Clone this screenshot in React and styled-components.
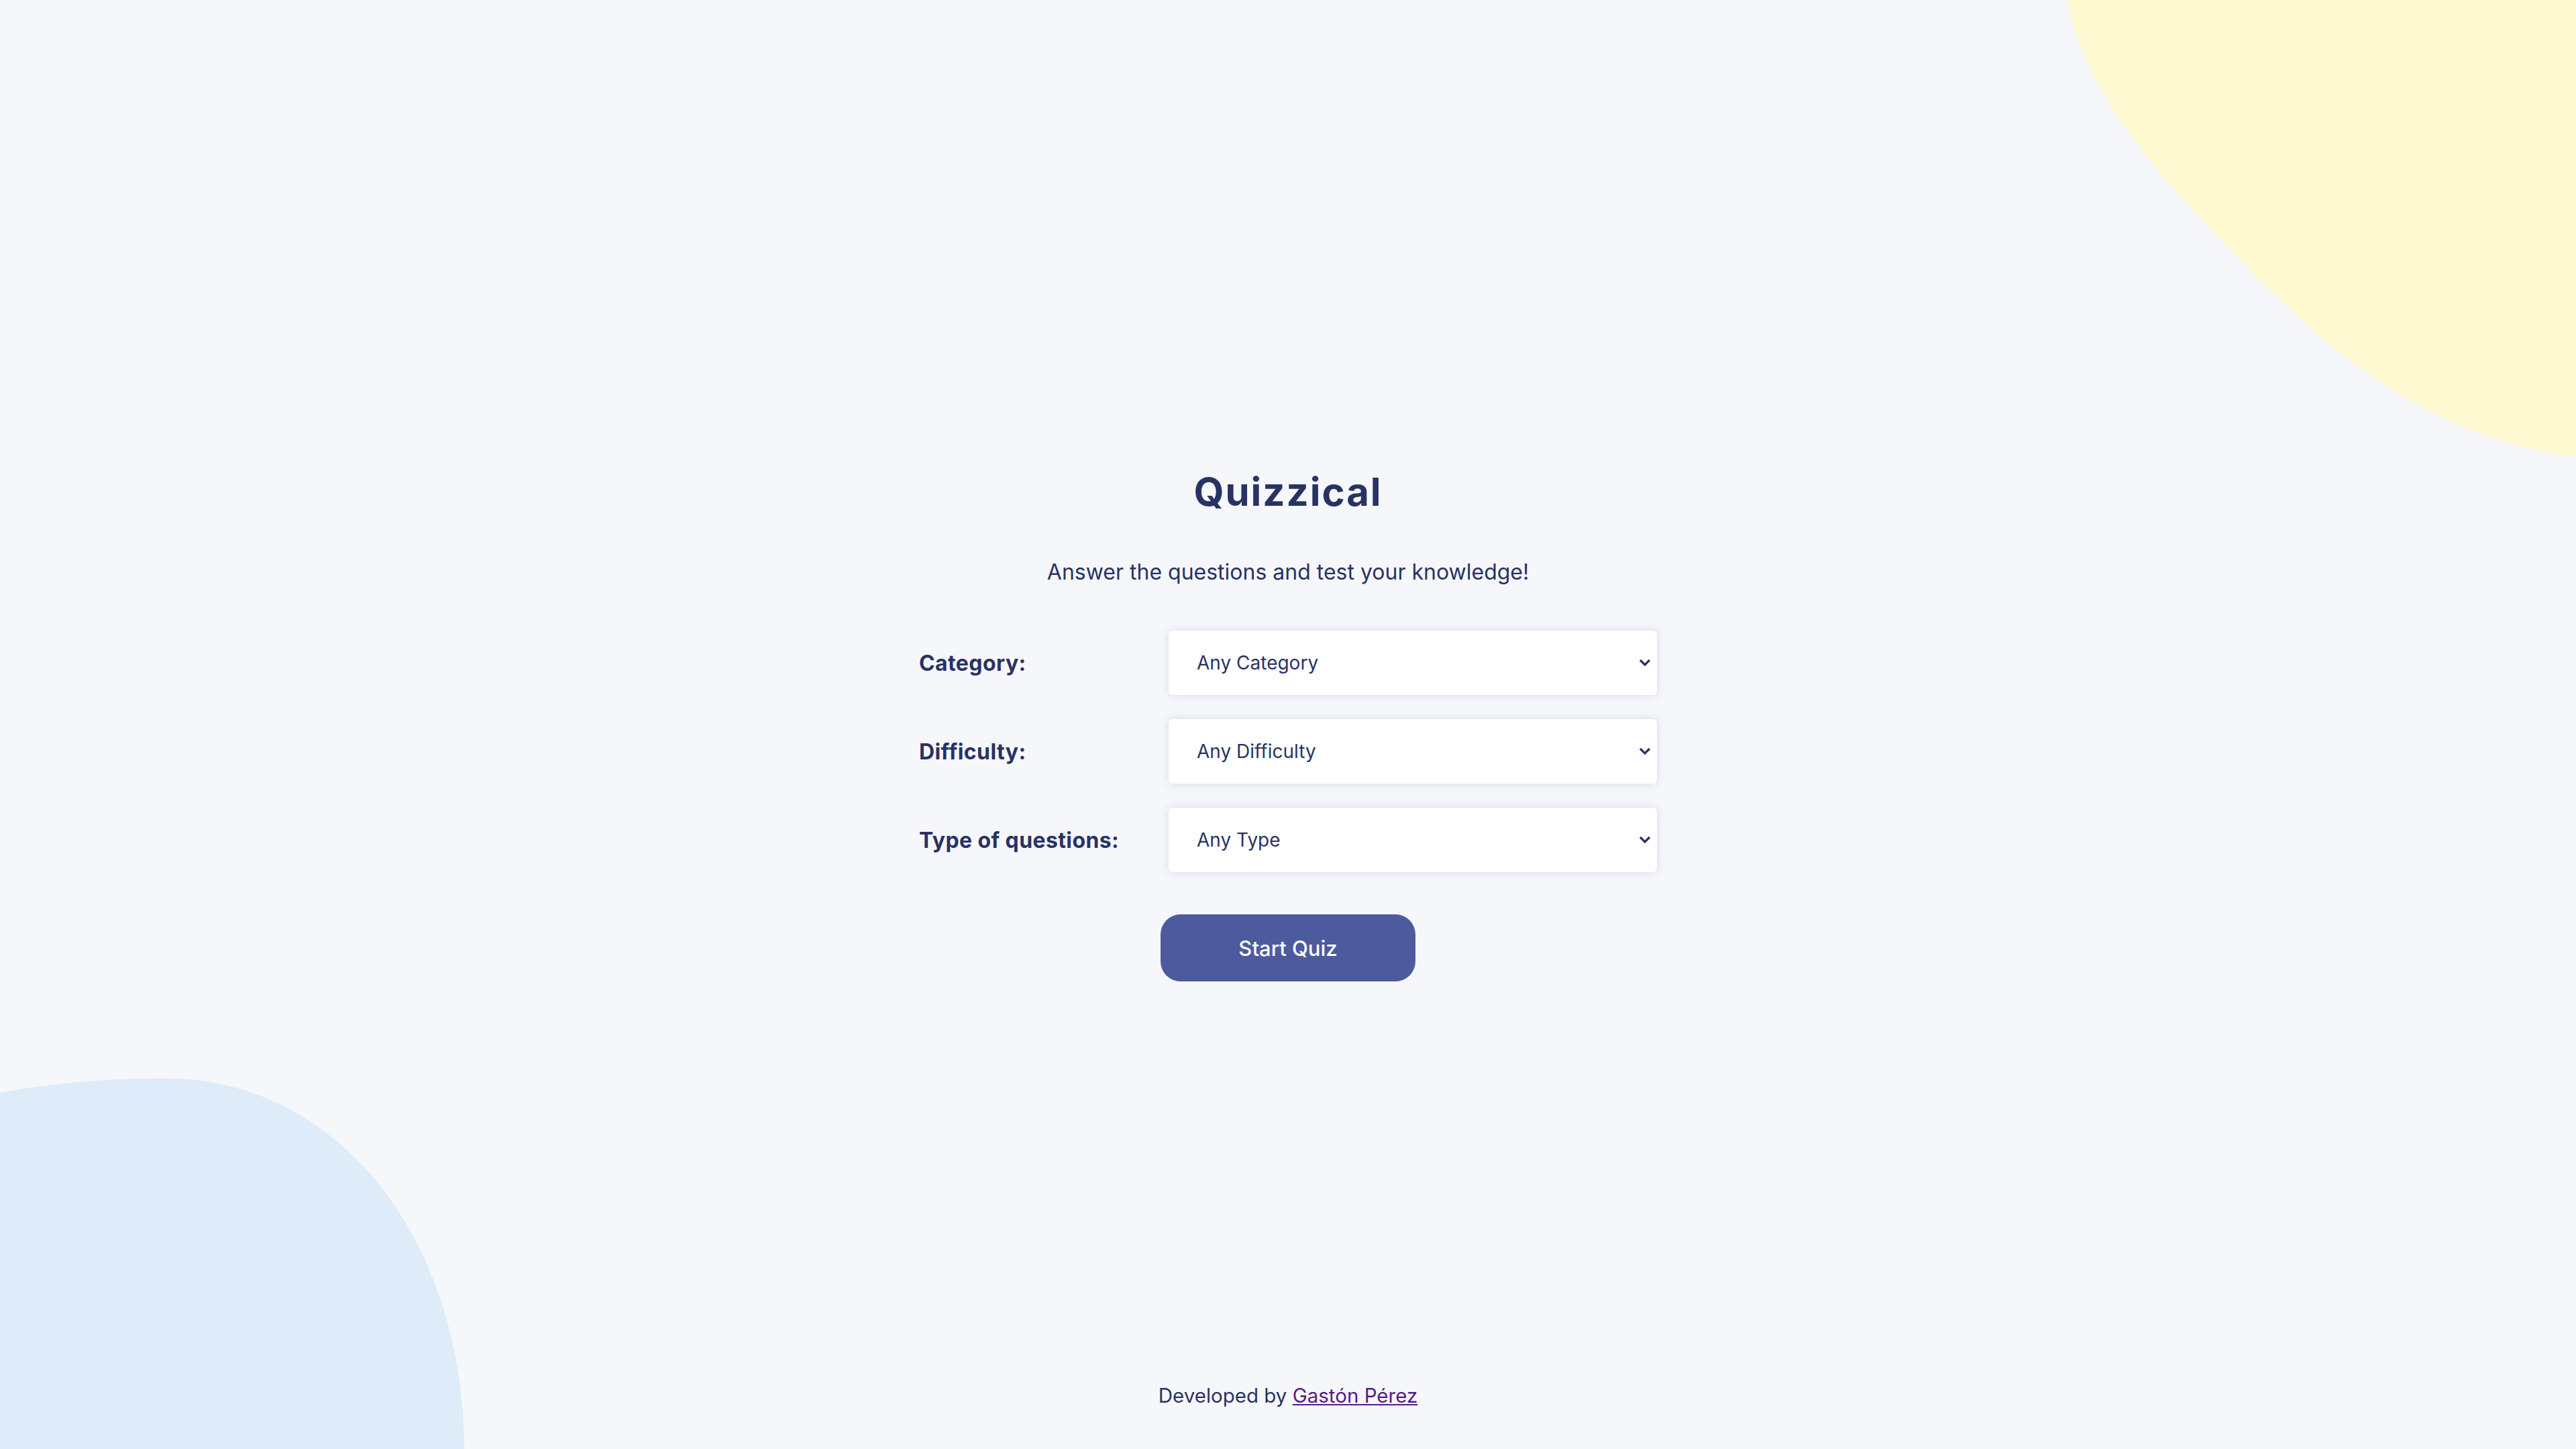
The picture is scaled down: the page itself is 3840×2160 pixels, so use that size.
import React from "react";
import styled, { createGlobalStyle } from "styled-components";

const GlobalStyle = createGlobalStyle`
  * { box-sizing: border-box; }
  html, body { margin: 0; padding: 0; }
  body {
    background: #f5f7fb;
    color: #293264;
    font-family: Inter, "Noto Sans", sans-serif;
  }
`;

const fields = [
  { id: "category", label: "Category:", options: ["Any Category", "General Knowledge", "Books", "Film", "Music"] },
  { id: "difficulty", label: "Difficulty:", options: ["Any Difficulty", "Easy", "Medium", "Hard"] },
  { id: "type", label: "Type of questions:", options: ["Any Type", "Multiple Choice", "True / False"] },
];

const Chevron = () => (
  <ArrowIcon width="18" height="12" viewBox="0 0 18 12" aria-hidden="true">
    <path d="M2 2 L9 9 L16 2" fill="none" stroke="#293264" strokeWidth="3.2" />
  </ArrowIcon>
);

const App = () => {
  return (
    <Page>
      <GlobalStyle />
      <YellowBlob viewBox="0 0 759 681" preserveAspectRatio="none" aria-hidden="true">
        <path d="M0 0 C30 150, 150 280, 300 430 C430 560, 580 660, 759 681 L759 0 Z" fill="#fffad1" />
      </YellowBlob>
      <BlueBlob viewBox="0 0 692 560" preserveAspectRatio="none" aria-hidden="true">
        <path d="M0 29 C80 14, 170 6, 260 8 C500 14, 690 240, 692 560 L0 560 Z" fill="#deebf8" />
      </BlueBlob>

      <Main>
        <Title>Quizzical</Title>
        <Subtitle>Answer the questions and test your knowledge!</Subtitle>
        <Form>
          {fields.map(f => (
            <React.Fragment key={f.id}>
              <Label htmlFor={f.id}>{f.label}</Label>
              <SelectWrap>
                <Select id={f.id} defaultValue={f.options[0]}>
                  {f.options.map(o => (
                    <option key={o}>{o}</option>
                  ))}
                </Select>
                <Chevron />
              </SelectWrap>
            </React.Fragment>
          ))}
        </Form>
        <StartButton type="button">Start Quiz</StartButton>
      </Main>

      <Footer>
        Developed by <FooterLink href="#">Gastón Pérez</FooterLink>
      </Footer>
    </Page>
  );
};

export default App;

const Page = styled.div`
  position: relative;
  min-height: 100vh;
  display: flex;
  flex-direction: column;
  overflow: hidden;
`;

const YellowBlob = styled.svg`
  position: absolute;
  top: 0;
  right: 0;
  width: 759px;
  height: 681px;
  z-index: 0;
`;

const BlueBlob = styled.svg`
  position: absolute;
  left: 0;
  bottom: 0;
  width: 692px;
  height: 560px;
  z-index: 0;
`;

const Main = styled.main`
  position: relative;
  z-index: 1;
  flex: 1;
  display: flex;
  flex-direction: column;
  align-items: center;
  justify-content: center;
  padding-top: 100px;
`;

const Title = styled.h1`
  margin: 0;
  font-family: Inter, sans-serif;
  font-weight: 700;
  font-size: 58px;
  letter-spacing: 2px;
  line-height: 1.2;
`;

const Subtitle = styled.p`
  margin: 66px 0 0;
  font-size: 32px;
  line-height: 1.2;
  font-weight: 400;
`;

const Form = styled.div`
  margin-top: 68px;
  width: 1100px;
  display: grid;
  grid-template-columns: 372px 1fr;
  row-gap: 36px;
  align-items: center;
`;

const Label = styled.label`
  font-weight: 700;
  font-size: 32px;
  letter-spacing: 0.4px;
`;

const SelectWrap = styled.div`
  position: relative;
  height: 96px;
  border-radius: 6px;
  background: #fff;
  box-shadow: 0 0 14px rgba(41, 50, 100, 0.14);
`;

const Select = styled.select`
  appearance: none;
  width: 100%;
  height: 100%;
  border: none;
  outline: none;
  background: transparent;
  padding: 0 60px 0 42px;
  font-family: Inter, sans-serif;
  font-size: 28px;
  color: #293264;
  cursor: pointer;
`;

const ArrowIcon = styled.svg`
  position: absolute;
  right: 9px;
  top: 50%;
  transform: translateY(-50%);
  pointer-events: none;
`;

const StartButton = styled.button`
  margin-top: 63px;
  width: 380px;
  height: 100px;
  border: none;
  border-radius: 30px;
  background: #4d5b9e;
  color: #fff;
  font-family: Inter, sans-serif;
  font-size: 31px;
  font-weight: 500;
  cursor: pointer;
`;

const Footer = styled.footer`
  position: relative;
  z-index: 1;
  text-align: center;
  font-size: 29.5px;
  padding: 0 0 62px;
`;

const FooterLink = styled.a`
  color: #551a8b;
  text-decoration: underline;
`;
